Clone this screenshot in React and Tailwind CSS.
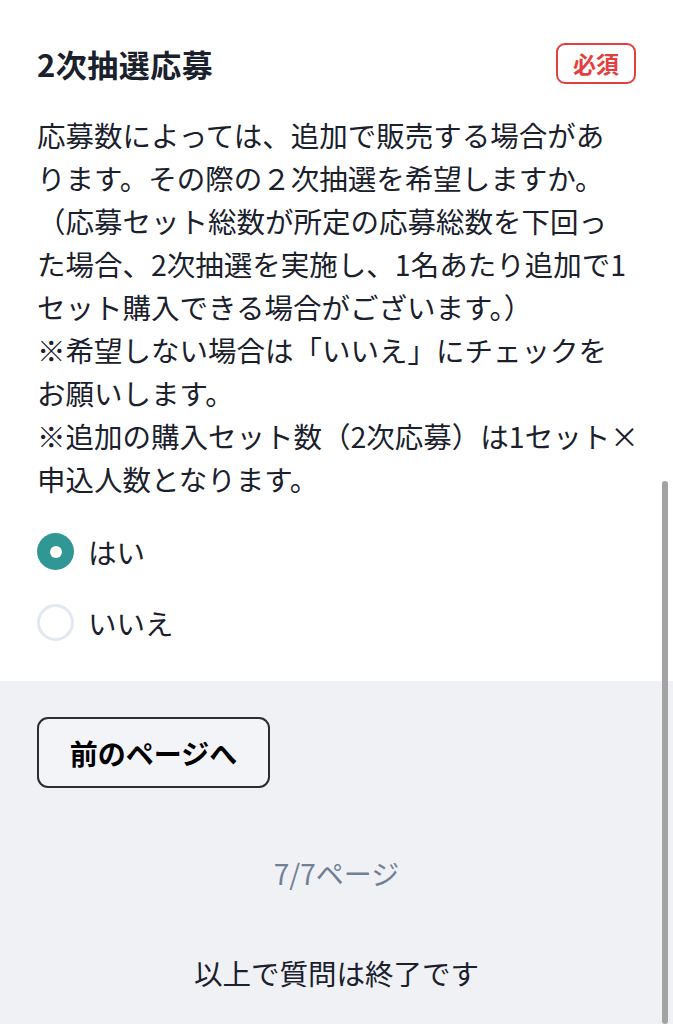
import React from "react";

const font = { fontFamily: '"Noto Sans CJK JP", "Noto Sans", sans-serif' };

const lines = [
  "応募数によっては、追加で販売する場合があ",
  "ります。その際の２次抽選を希望しますか。",
  "（応募セット総数が所定の応募総数を下回っ",
  "た場合、2次抽選を実施し、1名あたり追加で1",
  "セット購入できる場合がございます。）",
  "※希望しない場合は「いいえ」にチェックを",
  "お願いします。",
  "※追加の購入セット数（2次応募）は1セット×",
  "申込人数となります。",
];

export default function App() {
  return (
    <div
      className="relative flex min-h-[1024px] w-full flex-col text-[#1a202c]"
      style={font}
    >
      <section className="bg-white px-[37px] pt-[43px] pb-[37px]">
        <div className="flex h-[41px] items-center justify-between">
          <h2 className="text-[31px] font-bold leading-none tracking-[0.5px]">
            2次抽選応募
          </h2>
          <span className="flex h-[41px] w-[80px] items-center justify-center rounded-[9px] border-2 border-[#e53e3e] text-[23px] font-bold leading-none text-[#e53e3e]">
            必須
          </span>
        </div>
        <div className="mt-[29px] text-[28.5px] leading-[43px]">
          {lines.map((l, i) => (
            <div key={i} className="whitespace-nowrap">
              {l}
            </div>
          ))}
        </div>
        <div className="mt-[30px] flex flex-col gap-[28px]">
          <label className="flex h-[43px] items-center gap-[14px]">
            <span className="flex h-[37px] w-[37px] items-center justify-center rounded-full bg-[#319795]">
              <span className="h-[12px] w-[12px] rounded-full bg-white" />
            </span>
            <span className="text-[28.5px] leading-[43px]">はい</span>
          </label>
          <label className="flex h-[43px] items-center gap-[14px]">
            <span className="h-[37px] w-[37px] rounded-full border-[3px] border-[#e2e8f0] bg-white" />
            <span className="text-[28.5px] leading-[43px]">いいえ</span>
          </label>
        </div>
      </section>
      <section className="flex flex-1 flex-col bg-[#eff1f5] px-[37px] pt-[36px]">
        <div>
          <button className="h-[71px] w-[233px] rounded-[11px] border-2 border-[#2d2d2d] bg-[#f3f4f7] text-[28px] font-bold text-black">
            前のページへ
          </button>
        </div>
        <p className="mt-[64px] text-center text-[28px] leading-[43px] text-[#718096]">
          7/7ページ
        </p>
        <p className="mt-[56px] text-center text-[28.5px] font-normal leading-[43px]">
          以上で質問は終了です
        </p>
      </section>
      <div className="absolute right-[5px] top-[481px] bottom-0 w-[6px] rounded-full bg-[#a3a3a3]" />
    </div>
  );
}
